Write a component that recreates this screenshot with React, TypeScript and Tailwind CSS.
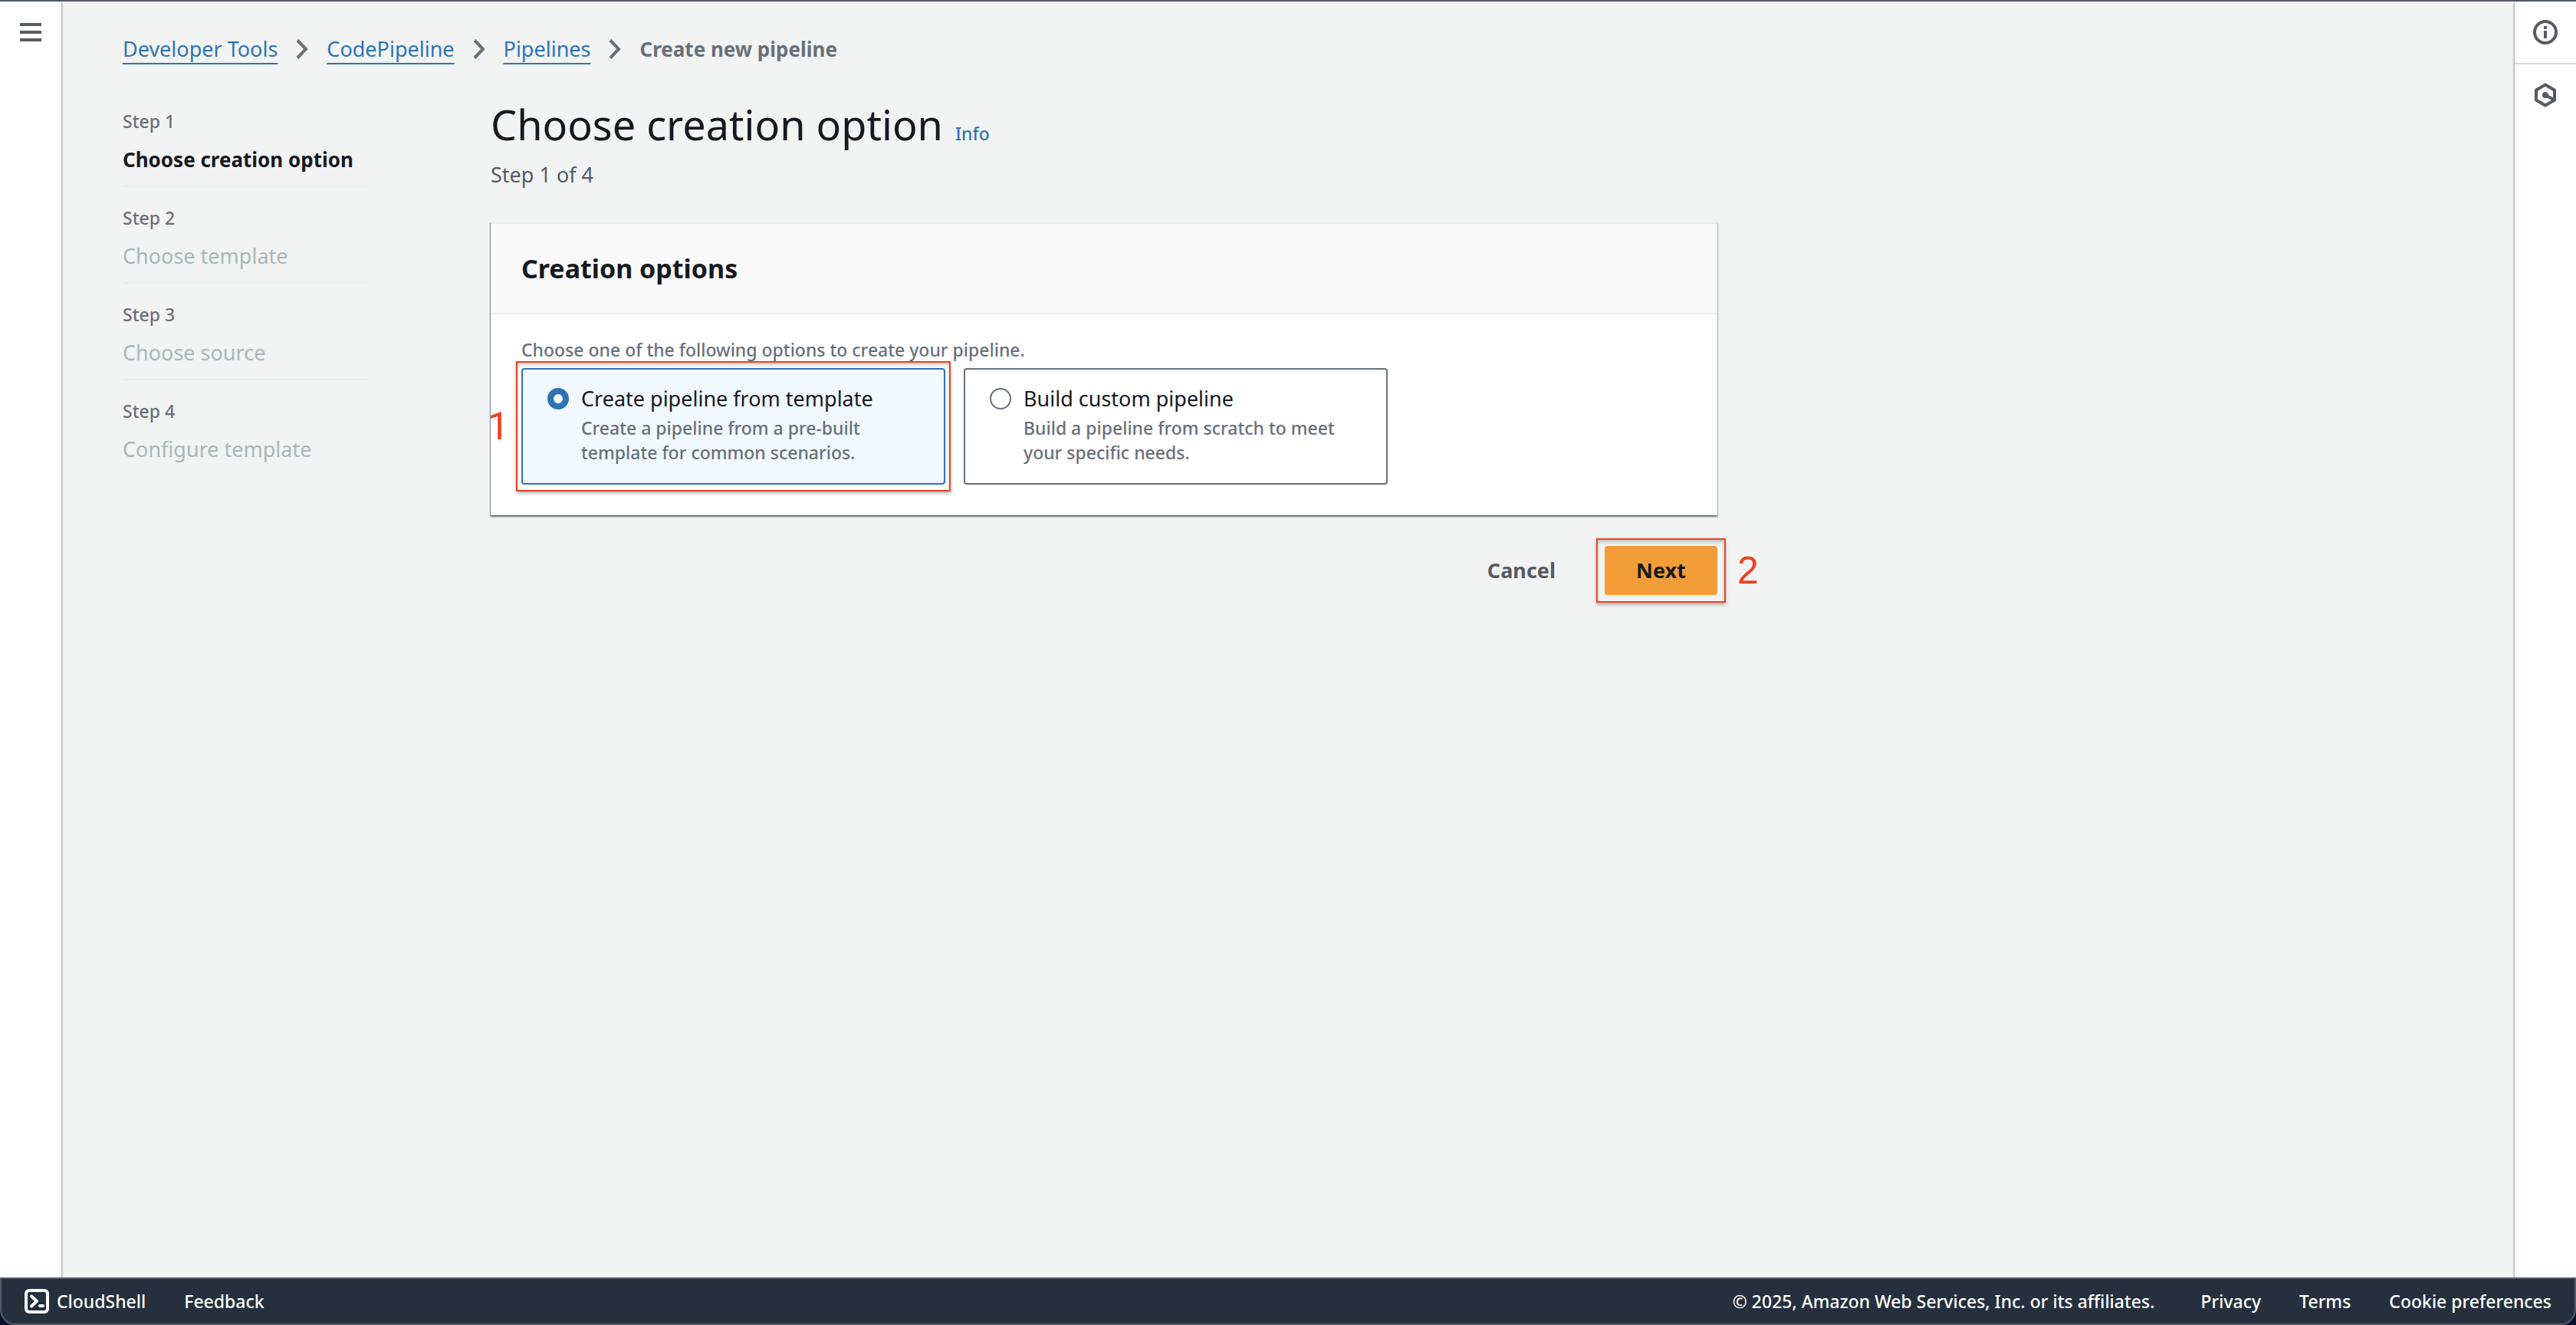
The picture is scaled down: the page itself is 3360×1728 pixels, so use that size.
import { useState } from "react";

const steps = [
  "Choose creation option",
  "Choose template",
  "Choose source",
  "Configure template",
];

const crumbs = ["Developer Tools", "CodePipeline", "Pipelines"];

const options = [
  {
    id: "template",
    label: "Create pipeline from template",
    description: "Create a pipeline from a pre-built template for common scenarios.",
  },
  {
    id: "custom",
    label: "Build custom pipeline",
    description: "Build a pipeline from scratch to meet your specific needs.",
  },
];

function Chevron() {
  return (
    <svg className="h-7 w-4" viewBox="0 0 16 28" fill="none" stroke="#687078" strokeWidth="4" aria-hidden="true">
      <path d="M2 2.5 13 14 2 25.5" />
    </svg>
  );
}

function MenuIcon() {
  return (
    <svg className="h-6 w-7" viewBox="0 0 28 24" fill="#545b64" aria-hidden="true">
      <path d="M0 0h28v4H0zM0 10h28v4H0zM0 20h28v4H0z" />
    </svg>
  );
}

function InfoIcon() {
  return (
    <svg className="size-8" viewBox="0 0 32 32" fill="none" aria-hidden="true">
      <circle cx="16" cy="16" r="14" stroke="#545b64" strokeWidth="4" />
      <path d="M14 8h4v4h-4zM14 14h4v10h-4z" fill="#545b64" />
    </svg>
  );
}

function HexagonIcon() {
  return (
    <svg className="size-8" viewBox="0 0 32 32" fill="none" stroke="#545b64" strokeWidth="4" aria-hidden="true">
      <path d="M28 22.500V9.500L16 2.500 4 9.500v13l12 7z" strokeLinejoin="round" />
      <path d="m16 16 12 6.500" />
      <circle cx="16" cy="16" r="4" fill="#545b64" stroke="none" />
    </svg>
  );
}

function TerminalIcon() {
  return (
    <svg className="size-8" viewBox="0 0 32 32" fill="none" stroke="#fff" strokeWidth="4" aria-hidden="true">
      <rect x="2" y="2" width="28" height="28" rx="4" />
      <path d="m9 9.500 7 6.500-7 6.500" strokeLinecap="round" strokeLinejoin="round" />
      <path d="M20 22h4" strokeLinecap="round" />
    </svg>
  );
}

export default function App() {
  const [selected, setSelected] = useState("template");

  return (
    <div className="flex min-h-screen flex-col bg-[#06122a] font-['Noto_Sans',sans-serif] text-[27px] leading-9 text-[#16191f]">
      <div className="flex flex-1 border-t-2 border-[#545b64] bg-[#f2f3f3]">
        <nav aria-label="Service navigation" className="z-10 w-20 shrink-0 bg-white pt-7 shadow-[1px_1px_2px_rgba(0,28,36,0.4)]">
          <button type="button" aria-label="Open navigation" className="flex w-full justify-center">
            <MenuIcon />
          </button>
        </nav>

        <main className="min-w-0 flex-1 px-20 pt-11 pb-20">
          <nav aria-label="Breadcrumbs">
            <ol className="flex items-center gap-6">
              {crumbs.map((crumb) => (
                <li key={crumb} className="flex items-center gap-6">
                  <a href="#" className="text-[#2e73b8] underline decoration-2 underline-offset-8">
                    {crumb}
                  </a>
                  <Chevron />
                </li>
              ))}
              <li aria-current="page" className="text-[26px] font-bold text-[#687078]">
                Create new pipeline
              </li>
            </ol>
          </nav>

          <div className="mt-12 flex gap-40">
            <ol className="w-80 shrink-0 pt-3">
              {steps.map((step, i) => (
                <li key={step} className="mb-6 border-b-2 border-[#eaeded] pb-4 last:border-b-0">
                  <div className="mb-4 text-[23px] leading-8 font-medium text-[#687078]">Step {i + 1}</div>
                  {i === 0 ? (
                    <div className="text-[26px] font-bold">{step}</div>
                  ) : (
                    <div className="text-[#aab7b8]">{step}</div>
                  )}
                </li>
              ))}
            </ol>

            <div className="w-full max-w-[1600px]">
              <div className="flex items-baseline gap-4">
                <h1 className="text-[54px] leading-16">Choose creation option</h1>
                <a href="#" className="text-[23px] leading-8 font-medium text-[#2e73b8]">Info</a>
              </div>
              <p className="mt-4 text-[#545b64]">Step 1 of 4</p>

              <section className="mt-11 border-t-2 border-[#eaeded] bg-white shadow-[0_2px_2px_rgba(0,28,36,0.5),1px_1px_1px_rgba(0,28,36,0.15),-1px_1px_1px_rgba(0,28,36,0.3)]">
                <h2 className="border-b-2 border-[#eaeded] bg-[#fafafa] px-10 py-9 text-[34px] leading-11 font-bold">
                  Creation options
                </h2>
                <fieldset className="px-10 pt-[30px] pb-10">
                  <legend className="float-left mb-2 w-full text-[23px] leading-8 font-medium text-[#687078]">
                    Choose one of the following options to create your pipeline.
                  </legend>
                  <div className="relative clear-both grid max-w-[1130px] grid-cols-2 gap-6">
                    {options.map((option) => (
                      <div key={option.id} className="relative">
                        <label className="flex h-full gap-4 rounded-[4px] border-2 border-[#687078] py-5 pr-10 pl-8 has-checked:border-[#2e73b8] has-checked:bg-[#f1f8ff]">
                          <input
                            type="radio"
                            name="creation-option"
                            checked={selected === option.id}
                            onChange={() => setSelected(option.id)}
                            className="mt-1 size-7 shrink-0 appearance-none rounded-full border-2 border-[#687078] bg-white checked:border-8 checked:border-[#2e73b8]"
                          />
                          <span className="block pb-1">
                            <span className="block">{option.label}</span>
                            <span className="mt-1 block text-[23px] leading-8 font-medium text-[#687078]">{option.description}</span>
                          </span>
                        </label>
                        {option.id === "template" && (
                          <>
                            <div className="pointer-events-none absolute -inset-x-[7px] -inset-y-[9px] border-2 border-[#ee4123] shadow-[0_3px_4px_rgba(0,0,0,0.25),inset_0_3px_4px_rgba(0,0,0,0.2)]" />
                            <div className="pointer-events-none absolute inset-y-0 -left-11 flex items-center font-['Roboto',sans-serif] text-[50px] leading-none text-[#ee4123]">
                              1
                            </div>
                          </>
                        )}
                      </div>
                    ))}
                  </div>
                </fieldset>
              </section>

              <div className="mt-10 flex justify-end gap-6 text-[27px] font-bold">
                <button type="button" className="h-16 px-10 text-[#545b64]">Cancel</button>
                <div className="relative">
                  <button type="button" className="h-16 min-w-[147px] rounded-[4px] bg-[#f29d38]">Next</button>
                  <div className="pointer-events-none absolute -inset-x-[11px] -inset-y-[10px] border-2 border-[#ee4123] shadow-[0_3px_4px_rgba(0,0,0,0.25),inset_0_3px_4px_rgba(0,0,0,0.2)]" />
                  <div className="pointer-events-none absolute inset-y-0 left-full ml-[26px] flex items-center font-['Liberation_Sans',sans-serif] text-[50px] font-normal text-[#ee4123]">
                    2
                  </div>
                </div>
              </div>
            </div>
          </div>
        </main>

        <aside aria-label="Tools" className="z-10 w-20 shrink-0 bg-white shadow-[-1px_1px_2px_rgba(0,28,36,0.4)]">
          <button type="button" aria-label="Info panel" className="flex w-full justify-center border-b-2 border-[#d5dbdb] py-6">
            <InfoIcon />
          </button>
          <button type="button" aria-label="Diagnostics panel" className="flex w-full justify-center py-6">
            <HexagonIcon />
          </button>
        </aside>
      </div>

      <footer className="z-20 flex items-center justify-between rounded-b-[20px] border-2 border-[#545b64] bg-[#252f3d] px-[30px] py-[13px] text-[23px] leading-8 font-medium text-white">
        <div className="flex gap-[50px]">
          <button type="button" className="flex items-center gap-[10px]">
            <TerminalIcon />
            CloudShell
          </button>
          <button type="button">Feedback</button>
        </div>
        <div className="flex gap-[50px]">
          <span className="mr-[10px]">© 2025, Amazon Web Services, Inc. or its affiliates.</span>
          <a href="#">Privacy</a>
          <a href="#">Terms</a>
          <button type="button">Cookie preferences</button>
        </div>
      </footer>
    </div>
  );
}
